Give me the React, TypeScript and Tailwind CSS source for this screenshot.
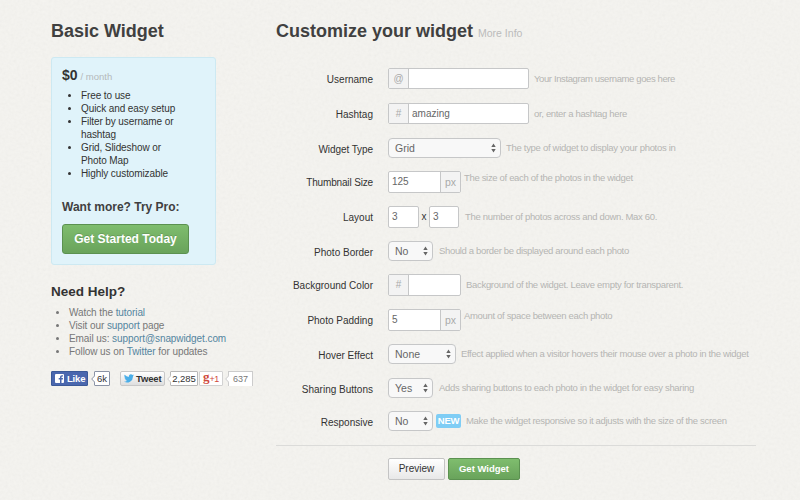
import type { ReactNode } from "react";

const fontStack = "font-['Liberation_Sans',Arial,sans-serif]";

function Texture() {
  return (
    <svg className="pointer-events-none absolute inset-0 h-full w-full opacity-[0.05]" aria-hidden="true">
      <filter id="paper">
        <feTurbulence type="fractalNoise" baseFrequency="0.35" numOctaves="3" seed="4" stitchTiles="stitch" />
        <feColorMatrix type="saturate" values="0" />
        <feComponentTransfer>
          <feFuncA type="linear" slope="0" intercept="1" />
        </feComponentTransfer>
      </filter>
      <rect width="100%" height="100%" filter="url(#paper)" />
    </svg>
  );
}

function Select({ value, width }: { value: string; width: string }) {
  return (
    <div className={`flex h-5 items-center justify-between rounded border border-[#c6c7c8] bg-[#f8f8f8] pr-[4px] pl-[6px] text-[10.5px] leading-3 text-[#666] ${width}`}>
      <span>{value}</span>
      <svg width="5" height="10" viewBox="0 0 5 10" fill="#666">
        <path d="M2.5 0.5 4.7 4H.3zM2.5 9.5 4.7 6H.3z" />
      </svg>
    </div>
  );
}

function Field({ before, after, value, size }: { before?: string; after?: string; value?: string; size: string }) {
  return (
    <div className={`flex overflow-hidden rounded-[2px] border border-[#c6c7c8] bg-white text-[10px] text-[#666] ${size}`}>
      {before && <span className="w-5 shrink-0 border-r border-[#c6c7c8] bg-[#f3f3f3] text-center text-[#aaa]">{before}</span>}
      <span className="grow pl-[3px]">{value}</span>
      {after && <span className="w-5 shrink-0 border-l border-[#c6c7c8] bg-[#f3f3f3] text-center text-[10.5px] text-[#aaa]">{after}</span>}
    </div>
  );
}

type RowData = { label: string; height: string; labelTracking?: string; control: ReactNode; hint: string; hintPos: string };

const rows: RowData[] = [
  { label: "Username", height: "h-[35px]", control: <Field before="@" size="w-[141px] h-[21px] leading-[19px]" />, hint: "Your Instagram username goes here", hintPos: "pl-[5px] pt-[5px] tracking-[-0.39px]" },
  { label: "Hashtag", height: "h-[35px]", control: <Field before="#" value="amazing" size="w-[141px] h-[21px] leading-[19px]" />, hint: "or, enter a hashtag here", hintPos: "pl-[5px] pt-[5px] tracking-[-0.33px]" },
  { label: "Widget Type", height: "h-[33px]", labelTracking: "tracking-[-0.08px]", control: <Select value="Grid" width="w-[113px]" />, hint: "The type of widget to display your photos in", hintPos: "pl-[5px] pt-[4px] tracking-[-0.3px]" },
  { label: "Thumbnail Size", height: "h-[35px]", labelTracking: "tracking-[-0.15px]", control: <Field value="125" after="px" size="w-[73px] h-[22px] leading-[20px]" />, hint: "The size of each of the photos in the widget", hintPos: "pl-[3px] pt-[1px] tracking-[-0.33px]" },
  {
    label: "Layout",
    height: "h-[35px]",
    control: (
      <div className="flex text-[10px] text-[#333]">
        <Field value="3" size="w-[31px] h-[22px] leading-[20px]" />
        <span className="w-[10px] pt-[5px] text-center leading-3">x</span>
        <Field value="3" size="w-[30px] h-[22px] leading-[20px]" />
      </div>
    ),
    hint: "The number of photos across and down. Max 60.",
    hintPos: "pl-[6px] pt-[5px] tracking-[-0.32px]",
  },
  { label: "Photo Border", height: "h-[33px]", control: <Select value="No" width="w-[45px]" />, hint: "Should a border be displayed around each photo", hintPos: "pl-[6px] pt-[4px] tracking-[-0.34px]" },
  { label: "Background Color", height: "h-[35px]", control: <Field before="#" size="w-[73px] h-[22px] leading-[20px]" />, hint: "Background of the widget. Leave empty for transparent.", hintPos: "pl-[5px] pt-[5px] tracking-[-0.31px]" },
  { label: "Photo Padding", height: "h-[35px]", control: <Field value="5" after="px" size="w-[73px] h-[22px] leading-[20px]" />, hint: "Amount of space between each photo", hintPos: "pl-[3px] pt-[1px] tracking-[-0.33px]" },
  { label: "Hover Effect", height: "h-[34px]", control: <Select value="None" width="w-[68px]" />, hint: "Effect applied when a visitor hovers their mouse over a photo in the widget", hintPos: "pl-[5px] pt-[4px] tracking-[-0.34px]" },
  { label: "Sharing Buttons", height: "h-[33px]", control: <Select value="Yes" width="w-[45px]" />, hint: "Adds sharing buttons to each photo in the widget for easy sharing", hintPos: "pl-[6px] pt-[4px] tracking-[-0.32px]" },
  {
    label: "Responsive",
    height: "h-[34px]",
    control: (
      <div className="flex">
        <Select value="No" width="w-[45px]" />
        <span className="mt-[3px] ml-[3px] h-[14px] w-[25px] rounded-[2px] bg-[#7fcdf5] text-center text-[9.5px] leading-[14px] font-bold tracking-[-0.3px] text-white">NEW</span>
      </div>
    ),
    hint: "Make the widget responsive so it adjusts with the size of the screen",
    hintPos: "pl-[5px] pt-[4px] tracking-[-0.33px]",
  },
];

function CountArrow({ stroke }: { stroke: string }) {
  return (
    <svg width="4" height="8" viewBox="0 0 4 8" className="relative z-10 -mr-px mt-[4px] shrink-0" fill="#fff" stroke={stroke}>
      <path d="M4 .5.7 4 4 7.5" />
    </svg>
  );
}

function SocialBar() {
  return (
    <div className="mt-[13px] flex h-[15px] text-[9.5px] leading-[15px]">
      <div className="flex w-[37px] items-center rounded-[1px] border border-[#3b5998] bg-[#4a67ae] pl-[3px] font-bold text-white">
        <svg width="9" height="9" viewBox="0 0 9 9">
          <rect width="9" height="9" rx="1" fill="#fff" />
          <path d="M5 9V5.5H3.7V4H5V3q0-1.8 1.8-1.8H8v1.4H7.1q-.6 0-.6.6V4H8L7.8 5.5H6.5V9z" fill="#4a67ae" />
        </svg>
        <span className="ml-[3px] tracking-[-0.2px]">Like</span>
      </div>
      <div className="ml-[3px] flex w-[19px]">
        <CountArrow stroke="#8b93a5" />
        <span className="h-[15px] grow rounded-[1px] border border-[#8b93a5] bg-white text-center leading-[14px] text-[#333]">6k</span>
      </div>
      <div className="ml-[10px] flex w-[45px] items-center rounded-[2px] border border-[#c8c8c8] bg-linear-to-b from-white to-[#dedede] pl-[3px] font-bold text-[#333]">
        <svg width="10" height="9" viewBox="0 0 24 20" fill="#4aaee8">
          <path d="M24 2.4a10 10 0 0 1-2.8.8A5 5 0 0 0 23.3.5a10 10 0 0 1-3.1 1.2 4.9 4.9 0 0 0-8.4 4.5A14 14 0 0 1 1.7 1a4.9 4.9 0 0 0 1.5 6.6A5 5 0 0 1 1 7a4.9 4.9 0 0 0 3.9 4.9 5 5 0 0 1-2.2.1 4.9 4.9 0 0 0 4.6 3.4A10 10 0 0 1 0 17.4 14 14 0 0 0 21.5 5a10 10 0 0 0 2.5-2.6z" />
        </svg>
        <span className="ml-[2px] tracking-[-0.15px]">Tweet</span>
      </div>
      <div className="ml-[2px] flex w-[31px]">
        <CountArrow stroke="#ccc" />
        <span className="h-[15px] grow rounded-[1px] border border-[#b8b8b8] bg-white text-center leading-[14px] tracking-[-0.1px] text-[#333]">2,285</span>
      </div>
      <div className="ml-[1px] flex h-[15px] w-[24px] items-center justify-center rounded-[1px] border border-[#d2d2d2] bg-white text-[#d04a3c]">
        <span className="-mt-[3px] font-['Liberation_Serif',serif] text-[13px] leading-3 font-bold">g</span>
        <span className="text-[9px] leading-3 tracking-[-0.3px]">+1</span>
      </div>
      <div className="ml-[2px] flex w-[28px]">
        <CountArrow stroke="#ccc" />
        <span className="h-[15px] grow border border-b-0 border-[#ccc] bg-white text-center text-[9px] leading-[15px] text-[#777]">637</span>
      </div>
    </div>
  );
}

export default function App() {
  return (
    <div className={`relative h-[500px] w-[800px] overflow-hidden bg-[#f6f5f1] text-[#333] ${fontStack}`}>
      <Texture />
      <div className="relative flex pl-[51px]">
        <aside className="w-[225px] shrink-0 pt-[20px]">
          <h1 className="text-[18px] leading-[22px] font-bold text-[#404040]">Basic Widget</h1>
          <section className="mt-[15px] h-[208px] w-[165px] rounded-[3px] border border-[#cde9f2] bg-[#e0f3fa] pt-[9px] pl-[10px]">
            <div className="flex items-baseline gap-[3px] leading-4">
              <strong className="text-[14px] text-[#333]">$0</strong>
              <span className="text-[9.5px] text-[#b5b9bb]">/ month</span>
            </div>
            <ul className="mt-[4px] w-[125px] list-disc pl-[19px] text-[10px] leading-[13px] tracking-[-0.1px]">
              <li>Free to use</li>
              <li>Quick and easy setup</li>
              <li>Filter by username or hashtag</li>
              <li>Grid, Slideshow or<br />Photo Map</li>
              <li>Highly customizable</li>
            </ul>
            <h3 className="mt-[19px] text-[12px] leading-4 font-bold text-[#404040]">Want more? Try Pro:</h3>
            <button className="mt-[9px] block h-[30px] w-[127px] rounded-[3px] border border-[#5b9150] bg-linear-to-b from-[#7fbd6e] to-[#69a35b] text-[12px] font-bold text-white [text-shadow:0_-1px_0_rgba(0,0,0,0.15)]">
              Get Started Today
            </button>
          </section>
          <h2 className="mt-[19px] text-[13.5px] leading-4 font-bold">Need Help?</h2>
          <ul className="mt-[6px] list-disc pl-[18px] text-[10px] leading-[13px] tracking-[-0.08px] text-[#777]">
            <li>Watch the <a className="text-[#5485a0]">tutorial</a></li>
            <li>Visit our <a className="text-[#5485a0]">support</a> page</li>
            <li>Email us: <a className="text-[#5485a0]">support@snapwidget.com</a></li>
            <li>Follow us on <a className="text-[#5485a0]">Twitter</a> for updates</li>
          </ul>
          <SocialBar />
        </aside>
        <main className="w-[480px] pt-[20px]">
          <h1 className="h-[22px] text-[18px] leading-[22px] font-bold whitespace-nowrap text-[#404040]">
            Customize your widget <small className="text-[10.5px] font-normal text-[#bbb]">More Info</small>
          </h1>
          <form className="mt-[26px]">
            {rows.map((row) => (
              <div key={row.label} className={`flex items-start ${row.height}`}>
                <label className={`w-[97px] shrink-0 pt-[6px] text-right text-[10px] leading-3 ${row.labelTracking ?? ""}`}>{row.label}</label>
                <div className="ml-[15px] shrink-0">{row.control}</div>
                <span className={`text-[9.5px] leading-3 whitespace-nowrap text-[#b5b5b3] ${row.hintPos}`}>{row.hint}</span>
              </div>
            ))}
            <hr className="border-[#dbdbd9]" />
            <div className="flex gap-[3px] pt-[12px] pl-[112px]">
              <button className="h-[22px] w-[57px] rounded-[2px] border border-[#c4c4c4] bg-linear-to-b from-white to-[#e8e8e8] pb-px text-[10px] text-[#333]">Preview</button>
              <button className="h-[22px] w-[72px] rounded-[2px] border border-[#5b9150] bg-linear-to-b from-[#7fbd6e] to-[#69a35b] text-[9.5px] font-bold text-white">Get Widget</button>
            </div>
          </form>
        </main>
      </div>
    </div>
  );
}
